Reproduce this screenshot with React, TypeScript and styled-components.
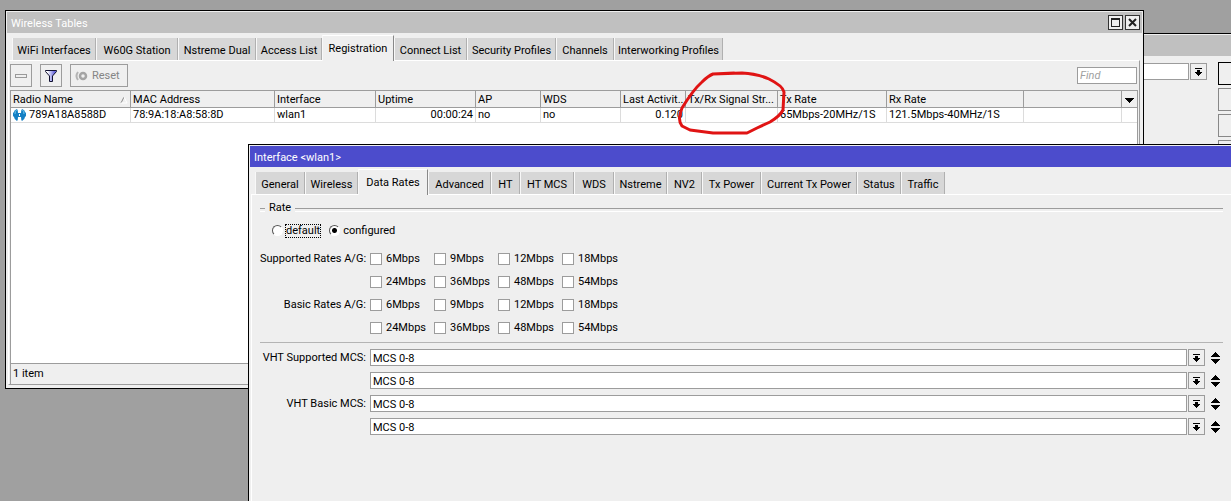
import React from "react";
import styled, { createGlobalStyle, css } from "styled-components";

const face = "#efefef";
const line = "#9c9c9c";

const GlobalStyle = createGlobalStyle`
  * { box-sizing: border-box; }
  body { margin: 0; background: #a0a0a0; }
  body, button, input {
    font-family: Roboto, "Liberation Sans", Arial, sans-serif;
    font-size: 11px;
    line-height: 14px;
    color: #000;
  }
`;

const Desktop = styled.main`
  position: relative;
  min-height: 100vh;
  overflow: hidden;
  background: #a0a0a0;
`;

/* Windows float freely on the desktop */
const Window = styled.section`
  position: absolute;
  display: flex;
  flex-direction: column;
  border: 1px solid #000;
  padding: 1px;
  background: ${face};
`;
const TablesWindow = styled(Window)`
  top: 10px;
  left: 5px;
  right: 87px;
  height: 379px;
`;
const BackWindow = styled(Window)`
  top: 33px;
  left: 900px;
  right: -60px;
  height: 240px;
`;
const InterfaceWindow = styled(Window)`
  top: 144px;
  left: 248px;
  right: -8px;
  bottom: -8px;
`;

const TitleBar = styled.header<{ $active?: boolean }>`
  display: flex;
  align-items: center;
  gap: 2px;
  flex: none;
  height: 21px;
  padding: 0 2px 0 4px;
  background: ${(p) => (p.$active ? "#4c4ccc" : "#c0c0c0")};
  color: #fff;
`;
const Title = styled.h1`
  flex: 1;
  margin: 0;
  padding-top: 3px;
  font-size: 11px;
  font-weight: 400;
`;
const CaptionButton = styled.button`
  display: flex;
  width: 15px;
  height: 15px;
  padding: 0;
  border: 1px solid #333;
  background: ${face};
`;

const TabList = styled.div`
  display: flex;
  align-items: flex-end;
  flex: none;
  height: 27px;
  padding-left: 5px;
`;
const Tab = styled.button<{ $selected: boolean; $width: number }>`
  flex: none;
  width: ${(p) => p.$width}px;
  height: 22px;
  padding: 3px 0 0;
  border: 0;
  border-left: 1px solid #f8f8f8;
  border-right: 1px solid #b0b0b0;
  background: #d7d7d7;
  white-space: nowrap;
  ${(p) =>
    p.$selected &&
    css`
      position: relative;
      height: 26px;
      margin-bottom: -1px;
      padding: 1px 0 0;
      border-top: 1px solid #fff;
      border-right-color: #888;
      background: ${face};
    `}
`;
const Panel = styled.div`
  display: flex;
  flex-direction: column;
  flex: 1;
  margin: 0 2px 2px 1px;
  padding: 3px 1px 0;
  border: 1px solid;
  border-color: #fff ${line} ${line} #fff;
`;

const Toolbar = styled.div`
  display: flex;
  align-items: center;
  gap: 8px;
  margin-bottom: 3px;
  padding-right: 1px;
`;
const ToolButton = styled.button<{ $wide?: boolean }>`
  display: flex;
  align-items: center;
  justify-content: ${(p) => (p.$wide ? "flex-start" : "center")};
  gap: 4px;
  width: ${(p) => (p.$wide ? 58 : 22)}px;
  height: 23px;
  padding: 0 0 0 ${(p) => (p.$wide ? 4 : 0)}px;
  border: 1px solid ${line};
  background: ${face};
  color: #858585;
`;
const Find = styled.input`
  width: 60px;
  height: 17px;
  margin-left: auto;
  padding: 0 2px;
  border: 1px solid ${line};
  font-style: italic;
  &::placeholder { color: #a0a0a0; opacity: 1; }
`;

const ListBox = styled.div`
  flex: 1;
  border: 1px solid ${line};
  border-bottom: 0;
  background: #fff;
`;
const Table = styled.table`
  width: 100%;
  table-layout: fixed;
  border-collapse: separate;
  border-spacing: 0;
  white-space: nowrap;
`;
const Head = styled.th`
  height: 17px;
  padding: 2px 2px 0;
  border-right: 1px solid ${line};
  border-bottom: 1px solid ${line};
  background: ${face};
  font-weight: 400;
  text-align: left;
  &:last-child { border-right: 0; }
`;
const HeadContent = styled.div`
  display: flex;
  justify-content: space-between;
  align-items: center;
`;
const MenuButton = styled.button`
  display: block;
  padding: 0 0 0 1px;
  border: 0;
  background: none;
  svg { display: block; }
`;
const Cell = styled.td<{ $right?: boolean }>`
  height: 15px;
  padding: 0 2px;
  border-right: 1px solid #dcdcdc;
  border-bottom: 1px solid #dcdcdc;
  text-align: ${(p) => (p.$right ? "right" : "left")};
  &:last-child { border-right: 0; }
`;
const RadioName = styled.span`
  display: flex;
  align-items: center;
  gap: 3px;
`;
const Status = styled.footer`
  flex: none;
  height: 21px;
  padding: 3px 2px;
  border: solid ${line};
  border-width: 1px 0 0 1px;
`;

const BackFields = styled.div`
  display: flex;
  justify-content: flex-end;
  gap: 11px;
  padding: 6px 1px 0 0;
`;
const BackCombo = styled.div`
  display: flex;
  gap: 1px;
  flex: 1;
  padding-top: 1px;
`;
const SideButtons = styled.div`
  display: flex;
  flex-direction: column;
  gap: 3px;
  flex: none;
  width: 70px;
`;
const SideButton = styled.button<{ $primary?: boolean }>`
  height: 23px;
  border: 1px solid ${(p) => (p.$primary ? "#000" : "#888")};
  background: ${face};
`;

const TextField = styled.input`
  flex: 1;
  min-width: 0;
  height: 17px;
  padding: 1px 2px 0;
  border: 1px solid ${line};
  background: #fff;
`;
const DropButton = styled.button`
  display: flex;
  align-items: center;
  justify-content: center;
  flex: none;
  width: 17px;
  height: 17px;
  padding: 0;
  border: 1px solid ${line};
  background: ${face};
`;
const SpinButton = styled.button`
  flex: none;
  width: 9px;
  height: 17px;
  margin-left: 5px;
  padding: 0;
  border: 0;
  background: none;
  svg { display: block; }
`;

const Form = styled.form`
  display: flex;
  flex-direction: column;
  gap: 6px;
  padding: 3px 10px 0 7px;
`;
const Group = styled.fieldset`
  margin: 0 0 5px;
  padding: 0;
  border: 0;
`;
const Legend = styled.legend`
  display: flex;
  align-items: center;
  gap: 4px;
  width: 100%;
  padding: 0;
  &::before, &::after {
    content: "";
    width: 5px;
    height: 2px;
    margin-top: 3px;
    border-top: 1px solid ${line};
    border-bottom: 1px solid #fff;
  }
  &::after { flex: 1; }
`;
const RadioRow = styled.div`
  display: flex;
  gap: 9px;
  margin: 7px 0 0 12px;
`;
const Choice = styled.label`
  display: flex;
  align-items: center;
  gap: 3px;
  height: 17px;
  white-space: nowrap;
`;
const RadioInput = styled.input`
  appearance: none;
  width: 11px;
  height: 11px;
  margin: 0;
  border: 1px solid;
  border-color: #555 #fff #fff #555;
  border-radius: 50%;
  background: #fff;
  &:checked { background: radial-gradient(circle, #000 2px, #fff 3px); }
`;
const FocusText = styled.span`
  line-height: 12px;
  outline: 1px dotted #000;
`;
const Row = styled.div`
  display: grid;
  grid-template-columns: 106px 1fr;
  gap: 4px;
  align-items: center;
  height: 17px;
  padding-right: 3px;
`;
const RowLabel = styled.label`
  text-align: right;
  white-space: nowrap;
`;
const Checks = styled.div`
  display: grid;
  grid-template-columns: repeat(4, 64px);
`;
const CheckInput = styled.input`
  appearance: none;
  width: 12px;
  height: 12px;
  margin: 0 1px 0 0;
  border: 1px solid ${line};
  background: #fff;
`;
const Combo = styled.div`
  display: flex;
  gap: 1px;
`;
const Divider = styled.hr`
  width: 100%;
  height: 1px;
  margin: 0;
  border: 0;
  background: #b4b4b4;
`;

/* Hand-drawn marker ring lying over the table */
const Marker = styled.svg`
  position: absolute;
  top: 70px;
  left: 676px;
  pointer-events: none;
`;

const DropIcon = () => (
  <svg width="7" height="8" shapeRendering="crispEdges" aria-hidden="true">
    <path d="M0 0h7v1H0zM2 2h3v2h2v1H6v1H5v1H4v1H3V7H2V6H1V5H0V4h2z" />
  </svg>
);
const SpinIcon = () => (
  <svg width="9" height="12" shapeRendering="crispEdges" aria-hidden="true">
    <path d="M4 0h1v1h1v1h1v1h1v1h1v1H0V4h1V3h1V2h1V1h1zM0 7h9v1H8v1H7v1H6v1H5v1H4v-1H3v-1H2V9H1V8H0z" />
  </svg>
);
const FilterIcon = () => (
  <svg width="14" height="14" aria-hidden="true">
    <defs>
      <linearGradient id="funnel">
        <stop offset="0.2" stopColor="#fff" />
        <stop offset="0.8" stopColor="#6a6ae0" />
      </linearGradient>
    </defs>
    <path d="M1.5 1.500h11v1l-4 4.500v5.500h-3V7l-4-4.500z" fill="url(#funnel)" stroke="#111130" />
  </svg>
);
const ResetIcon = () => (
  <svg width="13" height="10" fill="none" aria-hidden="true">
    <path d="M3 1Q0 5 3 9" stroke="#b4b4b4" strokeWidth="2" />
    <circle cx="8" cy="5" r="3" stroke="#a4a4a4" strokeWidth="2.500" />
  </svg>
);
const StationIcon = () => (
  <svg width="13" height="12" aria-hidden="true">
    <path
      d="M4 0Q1 1 1 3L0 4v3l1 1q0 2 3 4 1-1 1-4h3q0 3 1 4 3-2 3-4l1-1V4l-1-1q0-2-3-3-1 1-1 4H5Q5 1 4 0z"
      fill="#1580c4"
    />
    <path d="M3.500 1Q2 2 2 5M9.500 1Q11 2 11 5" stroke="#6cc8f0" fill="none" />
    <path d="M6 5h1v2H6z" fill="#fff" />
  </svg>
);

type TabSpec = [name: string, width: number];

const tableTabs: TabSpec[] = [
  ["WiFi Interfaces", 84], ["W60G Station", 82], ["Nstreme Dual", 78], ["Access List", 66],
  ["Registration", 72], ["Connect List", 73], ["Security Profiles", 89], ["Channels", 58],
  ["Interworking Profiles", 109],
];
const interfaceTabs: TabSpec[] = [
  ["General", 50], ["Wireless", 53], ["Data Rates", 70], ["Advanced", 63], ["HT", 29],
  ["HT MCS", 54], ["WDS", 40], ["Nstreme", 53], ["NV2", 35], ["Tx Power", 59],
  ["Current Tx Power", 96], ["Status", 44], ["Traffic", 44],
];

const Tabs = ({ tabs, selected }: { tabs: TabSpec[]; selected: string }) => (
  <TabList role="tablist">
    {tabs.map(([name, width]) => (
      <Tab key={name} role="tab" aria-selected={name === selected} $selected={name === selected} $width={width}>
        {name}
      </Tab>
    ))}
  </TabList>
);

const columns: { name: string; width?: number; value: string; right?: boolean }[] = [
  { name: "Radio Name", width: 120, value: "789A18A8588D" },
  { name: "MAC Address", width: 144, value: "78:9A:18:A8:58:8D" },
  { name: "Interface", width: 101, value: "wlan1" },
  { name: "Uptime", width: 100, value: "00:00:24", right: true },
  { name: "AP", width: 65, value: "no" },
  { name: "WDS", width: 80, value: "no" },
  { name: "Last Activit...", width: 65, value: "0.120", right: true },
  { name: "Tx/Rx Signal Str...", width: 92, value: "" },
  { name: "Tx Rate", width: 109, value: "65Mbps-20MHz/1S" },
  { name: "Rx Rate", width: 137, value: "121.5Mbps-40MHz/1S" },
  { name: "", value: "" },
];

const rates = [
  { label: "Supported Rates A/G:", items: ["6Mbps", "9Mbps", "12Mbps", "18Mbps"] },
  { label: "", items: ["24Mbps", "36Mbps", "48Mbps", "54Mbps"] },
  { label: "Basic Rates A/G:", items: ["6Mbps", "9Mbps", "12Mbps", "18Mbps"] },
  { label: "", items: ["24Mbps", "36Mbps", "48Mbps", "54Mbps"] },
];
const mcs = ["VHT Supported MCS:", "", "VHT Basic MCS:", ""];

export default function App() {
  return (
    <Desktop>
      <GlobalStyle />
      <BackWindow>
        <TitleBar />
        <BackFields>
          <BackCombo>
            <TextField aria-label="Value" />
            <DropButton aria-label="Open list"><DropIcon /></DropButton>
          </BackCombo>
          <SideButtons>
            <SideButton $primary aria-label="OK" />
            <SideButton aria-label="Cancel" />
            <SideButton aria-label="Apply" />
            <SideButton aria-label="Disable" />
          </SideButtons>
        </BackFields>
      </BackWindow>

      <TablesWindow>
        <TitleBar>
          <Title>Wireless Tables</Title>
          <CaptionButton aria-label="Maximize">
            <svg width="13" height="13" shapeRendering="crispEdges">
              <path d="M2 2h9v9H2zM3 4v6h7V4z" fill="#222" fillRule="evenodd" />
            </svg>
          </CaptionButton>
          <CaptionButton aria-label="Close">
            <svg width="13" height="13">
              <path d="M3 3l7 7M10 3l-7 7" stroke="#222" strokeWidth="2" />
            </svg>
          </CaptionButton>
        </TitleBar>
        <Tabs tabs={tableTabs} selected="Registration" />
        <Panel>
          <Toolbar>
            <ToolButton aria-label="Remove">
              <svg width="12" height="4" fill="none" shapeRendering="crispEdges">
                <path d="M.5 .5h11v3H.5z" stroke="#999" />
              </svg>
            </ToolButton>
            <ToolButton aria-label="Filter"><FilterIcon /></ToolButton>
            <ToolButton $wide><ResetIcon />Reset</ToolButton>
            <Find placeholder="Find" aria-label="Find" />
          </Toolbar>
          <ListBox>
            <Table>
              <colgroup>
                {columns.map((c) => <col key={c.name} width={c.width} />)}
                <col width={15} />
              </colgroup>
              <thead>
                <tr>
                  {columns.map((c, i) => (
                    <Head key={c.name}>
                      <HeadContent>
                        {c.name}
                        {i === 0 && (
                          <svg width="8" height="8" fill="none">
                            <path d="M1 7L4 1" stroke="#888" />
                            <path d="M4 1l3 6H1" stroke="#fff" />
                          </svg>
                        )}
                      </HeadContent>
                    </Head>
                  ))}
                  <Head>
                    <MenuButton aria-label="Columns">
                      <svg width="9" height="5" shapeRendering="crispEdges">
                        <path d="M0 0h9v1H8v1H7v1H6v1H5v1H4V4H3V3H2V2H1V1H0z" />
                      </svg>
                    </MenuButton>
                  </Head>
                </tr>
              </thead>
              <tbody>
                <tr>
                  {columns.map((c, i) => (
                    <Cell key={c.name} $right={c.right}>
                      {i === 0 ? <RadioName><StationIcon />{c.value}</RadioName> : c.value}
                    </Cell>
                  ))}
                  <Cell />
                </tr>
              </tbody>
            </Table>
          </ListBox>
          <Status>1 item</Status>
        </Panel>
      </TablesWindow>

      <Marker width="112" height="68" fill="none">
        <path
          d="M37 4L66 3Q82 4 93 9Q107 16 108 22L107 40Q104 46 94 52L81 58L71 63H37L14 60L6 56Q1 50 6 38Q17 20 26 12Q32 6 37 4L58 3"
          stroke="#e01414"
          strokeWidth="3"
          strokeLinecap="round"
          strokeLinejoin="round"
        />
      </Marker>

      <InterfaceWindow>
        <TitleBar $active><Title>Interface &lt;wlan1&gt;</Title></TitleBar>
        <Tabs tabs={interfaceTabs} selected="Data Rates" />
        <Panel>
          <Form>
            <Group>
              <Legend>Rate</Legend>
              <RadioRow>
                <Choice><RadioInput type="radio" name="rate" /><FocusText>default</FocusText></Choice>
                <Choice><RadioInput type="radio" name="rate" defaultChecked />configured</Choice>
              </RadioRow>
            </Group>
            {rates.map((r, i) => (
              <Row key={i}>
                <RowLabel as="span">{r.label}</RowLabel>
                <Checks>
                  {r.items.map((item) => (
                    <Choice key={item}><CheckInput type="checkbox" />{item}</Choice>
                  ))}
                </Checks>
              </Row>
            ))}
            <Divider />
            {mcs.map((label, i) => (
              <Row key={i}>
                <RowLabel htmlFor={`mcs${i}`}>{label}</RowLabel>
                <Combo>
                  <TextField id={`mcs${i}`} defaultValue="MCS 0-8" />
                  <DropButton type="button" aria-label="Open list"><DropIcon /></DropButton>
                  <SpinButton type="button" aria-label="Add or remove"><SpinIcon /></SpinButton>
                </Combo>
              </Row>
            ))}
          </Form>
        </Panel>
      </InterfaceWindow>
    </Desktop>
  );
}
